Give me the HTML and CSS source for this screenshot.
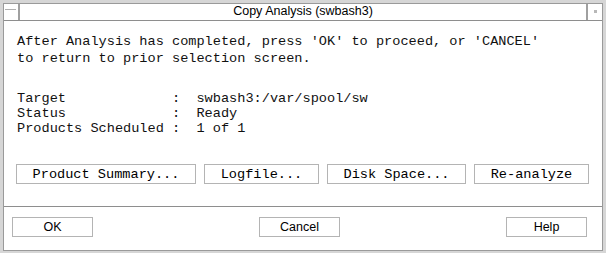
FILE: index.html
```html
<!doctype html>
<html lang="en">
	<head>
		<meta charset="utf-8">
		<title>Copy Analysis (swbash3)</title>
		<link rel="stylesheet" href="styles.css">
	</head>
	<body>
		<div class="window">
			<div class="titlebar">
				<div class="tbox menuBox"><span class="dash"></span></div>
				<div class="title">Copy Analysis (swbash3)</div>
				<div class="tbox minBox"><span class="dot"></span></div>
			</div>

			<div class="content">
				<p class="message">After Analysis has completed, press 'OK' to proceed, or 'CANCEL'<br>to return to prior selection screen.</p>

				<div class="info">
					<div class="row">Target             :  swbash3:/var/spool/sw</div>
					<div class="row">Status             :  Ready</div>
					<div class="row">Products Scheduled :  1 of 1</div>
				</div>

				<div class="actions">
					<button class="mono wide">Product Summary...</button>
					<button class="mono">Logfile...</button>
					<button class="mono mid">Disk Space...</button>
					<button class="mono">Re-analyze</button>
				</div>
			</div>

			<div class="footer">
				<button>OK</button>
				<button>Cancel</button>
				<button>Help</button>
			</div>
		</div>
	</body>
</html>
```

FILE: styles.css
```css
body {
	margin: 0;
	background: #ffffff;
}

.window {
	box-sizing: border-box;
	width: 606px;
	height: 253px;
	border: 3px solid #d6d6d6;
	border-bottom-width: 2px;
	display: flex;
	flex-direction: column;
	background: #ffffff;
	position: relative;
}

.window::after {
	content: "";
	position: absolute;
	inset: 0;
	border: 1px solid #9a9a9a;
	pointer-events: none;
}

.titlebar {
	display: flex;
	height: 17px;
	border-bottom: 1px solid #8e8e8e;
	font-family: "Liberation Sans", Arial, sans-serif;
	font-size: 12.5px;
}

.tbox {
	width: 15px;
	display: flex;
	align-items: center;
	justify-content: center;
}

.menuBox {
	border-right: 2px solid #a0a0a0;
}

.minBox {
	border-left: 2px solid #a0a0a0;
}

.dash {
	width: 11px;
	height: 1px;
	background: #b0b0b0;
	margin-top: -4px;
}

.dot {
	width: 3px;
	height: 3px;
	background: #b8b8b8;
}

.title {
	flex: 1;
	text-align: center;
	line-height: 17px;
	color: #000000;
}

.content {
	flex: 1;
	padding: 0 13px 0 13px;
	font-family: "Liberation Mono", "Courier New", monospace;
	font-size: 13.6px;
	color: #111111;
	border-bottom: 1px solid #8e8e8e;
}

.message {
	margin: 12px 0 0 1px;
	line-height: 17px;
}

.info {
	margin: 24px 0 0 1px;
	line-height: 15px;
}

.row {
	white-space: pre;
}

.actions {
	display: flex;
	justify-content: space-between;
	margin-top: 28px;
	padding: 0 1px 0 0;
}

button {
	box-sizing: border-box;
	height: 20px;
	background: #ffffff;
	border: 1px solid #b4b4b4;
	padding: 0;
	color: #000000;
}

.mono {
	font-family: "Liberation Mono", "Courier New", monospace;
	font-size: 13.6px;
	width: 115px;
}

.mono.wide {
	width: 180px;
}

.mono.mid {
	width: 139px;
}

.footer {
	flex: 0 0 44px;
	display: flex;
	justify-content: space-between;
	align-items: flex-start;
	padding: 10px 16px 0 9px;
	box-sizing: border-box;
}

.footer button {
	width: 81px;
	font-family: "Liberation Sans", Arial, sans-serif;
	font-size: 12.5px;
}
```
